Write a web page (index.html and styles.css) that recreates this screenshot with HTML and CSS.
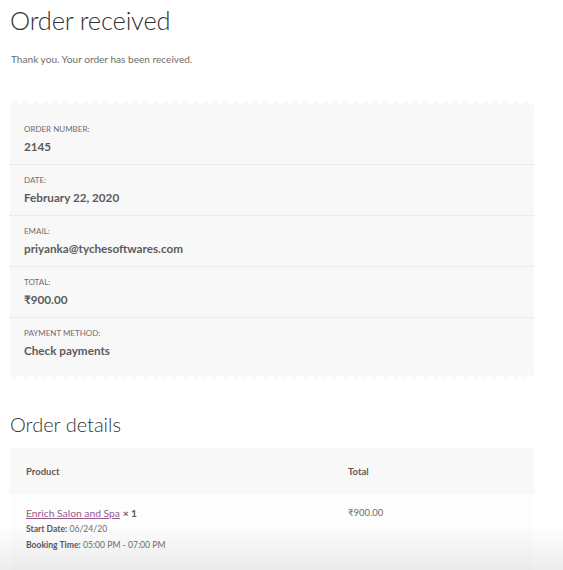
FILE: index.html
```html
<!DOCTYPE html>
<html>
<head>
<meta charset="utf-8">
<link rel="stylesheet" href="styles.css">
</head>
<body>
<main class="page">
  <h1 class="title">Order received</h1>
  <p class="thanks">Thank you. Your order has been received.</p>

  <section class="overview">
    <div class="overview-body">
      <div class="ov-row">
        <div class="ov-label">Order number:</div>
        <div class="ov-value">2145</div>
      </div>
      <div class="ov-row">
        <div class="ov-label">Date:</div>
        <div class="ov-value">February 22, 2020</div>
      </div>
      <div class="ov-row">
        <div class="ov-label">Email:</div>
        <div class="ov-value">priyanka@tychesoftwares.com</div>
      </div>
      <div class="ov-row">
        <div class="ov-label">Total:</div>
        <div class="ov-value">₹900.00</div>
      </div>
      <div class="ov-row ov-last">
        <div class="ov-label">Payment method:</div>
        <div class="ov-value">Check payments</div>
      </div>
    </div>
  </section>

  <h2 class="subtitle">Order details</h2>
  <div class="details">
    <div class="d-head">
      <div class="d-col-product">Product</div>
      <div class="d-col-total">Total</div>
    </div>
    <div class="d-row">
      <div class="d-col-product">
        <div class="item-line"><a class="item-link" href="#">Enrich Salon and Spa</a> <strong class="qty">× 1</strong></div>
        <div class="meta"><strong>Start Date:</strong> 06/24/20</div>
        <div class="meta"><strong>Booking Time:</strong> 05:00 PM - 07:00 PM</div>
      </div>
      <div class="d-col-total price">₹900.00</div>
    </div>
  </div>
</main>
<div class="shade"></div>
</body>
</html>
```

FILE: styles.css
```css
html, body {
  margin: 0;
  padding: 0;
  background: #ffffff;
}
body {
  font-family: "Source Sans Pro", Lato, "Open Sans", sans-serif;
  color: #6d6d6d;
  overflow: hidden;
}
.page {
  padding: 0 29px 0 10px;
  width: 524px;
}
.title {
  margin: 0;
  padding-top: 2px;
  font-size: 25.5px;
  line-height: 36px;
  font-weight: 300;
  color: #333333;
  letter-spacing: -0.2px;
}
.thanks {
  margin: 13px 0 0 1px;
  font-size: 10.1px;
  line-height: 16px;
}
.overview {
  margin-top: 33px;
}
.overview::before,
.overview::after {
  content: "";
  display: block;
  height: 5px;
  background-size: 10px 5px;
  background-repeat: repeat-x;
}
.overview::before {
  background-image: conic-gradient(from 135deg at 50% 0, #f8f8f8 90deg, transparent 0);
}
.overview::after {
  background-image: conic-gradient(from -45deg at 50% 100%, #f8f8f8 90deg, transparent 0);
}
.overview-body {
  background: #f8f8f8;
  padding: 9px 0 6px;
}
.ov-row {
  padding: 9px 14px 9px;
  border-bottom: 1px dotted #dcdcdc;
}
.ov-last {
  border-bottom: none;
}
.ov-label {
  font-size: 8px;
  line-height: 12px;
  text-transform: uppercase;
  margin-bottom: 2px;
  color: #6d6d6d;
}
.ov-value {
  font-size: 11.7px;
  line-height: 18px;
  font-weight: 700;
  color: #5b5b5b;
}
.subtitle {
  margin: 30px 0 0;
  font-size: 20px;
  line-height: 30px;
  font-weight: 300;
  color: #333333;
}
.details {
  margin-top: 9px;
}
.d-head {
  display: flex;
  background: #f8f8f8;
  height: 46px;
  align-items: center;
  font-size: 9.5px;
  font-weight: 700;
  color: #5b5b5b;
}
.d-row {
  display: flex;
  background: #fdfdfd;
  padding: 11px 0 18px;
  align-items: flex-start;
}
.d-col-product {
  width: 338px;
  padding-left: 16px;
  box-sizing: border-box;
}
.d-col-total {
  flex: 1;
}
.item-line {
  font-size: 10.3px;
  line-height: 16px;
}
.item-link {
  color: #96588a;
  text-decoration: underline;
}
.qty {
  color: #5b5b5b;
}
.meta {
  font-size: 8.6px;
  line-height: 16px;
  color: #6d6d6d;
}
.meta strong {
  color: #5b5b5b;
}
.price {
  font-size: 9.5px;
  line-height: 16px;
}
.shade {
  position: fixed;
  left: 0;
  right: 0;
  bottom: 0;
  height: 45px;
  background: linear-gradient(to bottom, rgba(0,0,0,0), rgba(0,0,0,0.07));
  pointer-events: none;
}
```
